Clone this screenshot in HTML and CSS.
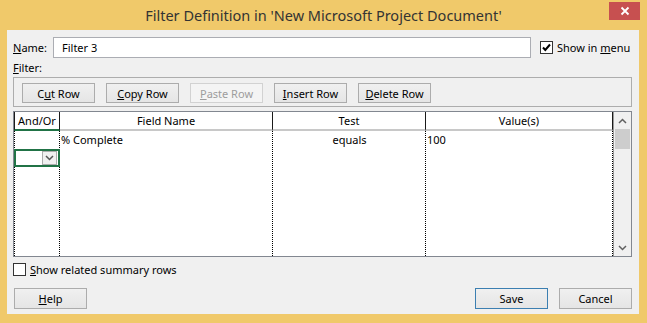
FILE: index.html
```html
<!DOCTYPE html>
<html lang="en">
<head>
    <meta charset="UTF-8">
    <title>Filter Definition</title>
    <link rel="stylesheet" href="styles.css">
</head>
<body>
    <div class="window">
        <div class="titlebar">
            <span class="title">Filter Definition in 'New Microsoft Project Document'</span>
            <div class="close">
                <svg width="10" height="10" viewBox="0 0 10 10"><path d="M1.5 1.5 L8.5 8.5 M8.5 1.5 L1.5 8.5" stroke="#fff" stroke-width="1.8"/></svg>
            </div>
        </div>
        <div class="client">
            <div class="name-row">
                <label class="name-label"><u>N</u>ame:</label>
                <div class="name-input">Filter 3</div>
                <span class="checkbox checked">
                    <svg width="11" height="11" viewBox="0 0 11 11"><path d="M2 5.5 L4.3 8 L9 2.5" fill="none" stroke="#000" stroke-width="2"/></svg>
                </span>
                <span class="check-label">Show in <u>m</u>enu</span>
            </div>
            <div class="filter-label"><u>F</u>ilter:</div>
            <div class="toolbar">
                <button class="btn">C<u>u</u>t Row</button>
                <button class="btn"><u>C</u>opy Row</button>
                <button class="btn disabled"><u>P</u>aste Row</button>
                <button class="btn"><u>I</u>nsert Row</button>
                <button class="btn"><u>D</u>elete Row</button>
            </div>
            <div class="grid">
                <div class="cells">
                    <div class="col col-andor">
                        <div class="head head-active">And/Or</div>
                        <div class="body">
                            <div class="cell"></div>
                            <div class="cell cell-selected">
                                <span class="dropdown">
                                    <svg width="9" height="6" viewBox="0 0 9 6"><path d="M1 1 L4.5 4.5 L8 1" fill="none" stroke="#555" stroke-width="1.5"/></svg>
                                </span>
                            </div>
                        </div>
                    </div>
                    <div class="col col-field">
                        <div class="head">Field Name</div>
                        <div class="body">
                            <div class="cell">% Complete</div>
                        </div>
                    </div>
                    <div class="col col-test">
                        <div class="head">Test</div>
                        <div class="body">
                            <div class="cell center">equals</div>
                        </div>
                    </div>
                    <div class="col col-value">
                        <div class="head">Value(s)</div>
                        <div class="body">
                            <div class="cell">100</div>
                        </div>
                    </div>
                </div>
                <div class="scrollbar">
                    <div class="arrow">
                        <svg width="9" height="6" viewBox="0 0 9 6"><path d="M1 5 L4.5 1.5 L8 5" fill="none" stroke="#606060" stroke-width="1.5"/></svg>
                    </div>
                    <div class="track">
                        <div class="thumb"></div>
                    </div>
                    <div class="arrow">
                        <svg width="9" height="6" viewBox="0 0 9 6"><path d="M1 1 L4.5 4.5 L8 1" fill="none" stroke="#606060" stroke-width="1.5"/></svg>
                    </div>
                </div>
            </div>
            <div class="summary-row">
                <span class="checkbox"></span>
                <span class="check-label"><u>S</u>how related summary rows</span>
            </div>
            <div class="footer">
                <button class="btn btn-help"><u>H</u>elp</button>
                <div class="footer-right">
                    <button class="btn default">Save</button>
                    <button class="btn">Cancel</button>
                </div>
            </div>
        </div>
    </div>
</body>
</html>
```

FILE: styles.css
```css
body {
    margin: 0;
    background-color: #f0c96a;
    font-family: "Noto Sans", "Open Sans", sans-serif;
    font-size: 11px;
    color: #000;
}
.window {
    height: 323px;
    display: flex;
    flex-direction: column;
}
.titlebar {
    height: 30px;
    flex-shrink: 0;
    display: flex;
    align-items: center;
    justify-content: center;
    position: relative;
}
.title {
    font-size: 14.5px;
    color: #333;
}
.close {
    position: absolute;
    top: 2px;
    right: 7px;
    width: 31px;
    height: 18px;
    background-color: #c75050;
    display: flex;
    align-items: center;
    justify-content: center;
}
.client {
    flex: 1;
    margin: 0 8px 9px 7px;
    background-color: #f0f0f0;
    padding: 7px 7px 0 6px;
    display: flex;
    flex-direction: column;
    min-height: 0;
}
.name-row {
    display: flex;
    align-items: center;
    height: 21px;
    flex-shrink: 0;
    white-space: nowrap;
}
.name-label {
    width: 40px;
}
.name-input {
    width: 468px;
    height: 19px;
    line-height: 19px;
    padding-left: 8px;
    border: 1px solid #abadb3;
    background-color: #fff;
}
.checkbox {
    width: 11px;
    height: 11px;
    border: 1px solid #333;
    background-color: #fff;
    display: flex;
    align-items: center;
    justify-content: center;
    flex-shrink: 0;
}
.name-row .checkbox {
    margin-left: 9px;
}
.check-label {
    margin-left: 4px;
    white-space: nowrap;
}
.filter-label {
    height: 19px;
    line-height: 20px;
    flex-shrink: 0;
}
.toolbar {
    height: 30px;
    box-sizing: border-box;
    flex-shrink: 0;
    border: 1px solid #adadad;
    display: flex;
    align-items: flex-start;
    gap: 11px;
    padding: 5px 8px 0;
}
.btn {
    width: 73px;
    height: 20px;
    padding: 0;
    font-family: inherit;
    font-size: inherit;
    color: #000;
    border: 1px solid #acacac;
    background: linear-gradient(#f0f0f0, #e5e5e5);
}
.btn.disabled {
    color: #9d9d9d;
    border-color: #d2d2d2;
    background: #f4f4f4;
}
.btn.default {
    border-color: #3c7fb1;
}
.grid {
    margin-top: 4px;
    height: 146px;
    box-sizing: border-box;
    flex-shrink: 0;
    border: 1px solid #828790;
    background-color: #fff;
    display: flex;
}
.cells {
    flex: 1;
    display: flex;
}
.col {
    display: flex;
    flex-direction: column;
}
.col-andor {
    width: 46px;
}
.col-field {
    width: 213px;
}
.col-test {
    width: 153px;
}
.col-value {
    flex: 1;
}
.head {
    height: 17px;
    line-height: 17px;
    text-align: center;
    border-right: 1px solid #1a1a1a;
    border-bottom: 2px solid #c8c8c8;
}
.head-active {
    border-left: 1px solid #1a1a1a;
    border-bottom-color: #217346;
}
.body {
    flex: 1;
    border-right: 1px dotted #000;
}
.col-andor .body {
    border-left: 1px dotted #000;
}
.cell {
    height: 18px;
    line-height: 17px;
    padding-left: 1px;
    box-sizing: border-box;
}
.cell.center {
    text-align: center;
}
.cell-selected {
    border: 2px solid #217346;
    margin-left: -1px;
    margin-right: -1px;
    display: flex;
    align-items: center;
    justify-content: flex-end;
    padding-right: 1px;
}
.dropdown {
    width: 13px;
    height: 12px;
    border: 1px solid #acacac;
    background-color: #f0f0f0;
    display: flex;
    align-items: center;
    justify-content: center;
}
.scrollbar {
    width: 17px;
    background-color: #f0f0f0;
    display: flex;
    flex-direction: column;
    border-left: 1px solid #9a9a9a;
}
.arrow {
    height: 17px;
    display: flex;
    align-items: center;
    justify-content: center;
}
.track {
    flex: 1;
    padding: 0 1px;
}
.thumb {
    height: 20px;
    background-color: #cdcdcd;
}
.summary-row {
    display: flex;
    align-items: center;
    margin-top: 5px;
    height: 14px;
    flex-shrink: 0;
}
.footer {
    margin-top: 12px;
    display: flex;
    justify-content: space-between;
    flex-shrink: 0;
}
.btn-help {
    margin-left: 1px;
    height: 21px;
}
.footer-right {
    display: flex;
    gap: 11px;
}
.footer-right .btn {
    height: 21px;
}
```
